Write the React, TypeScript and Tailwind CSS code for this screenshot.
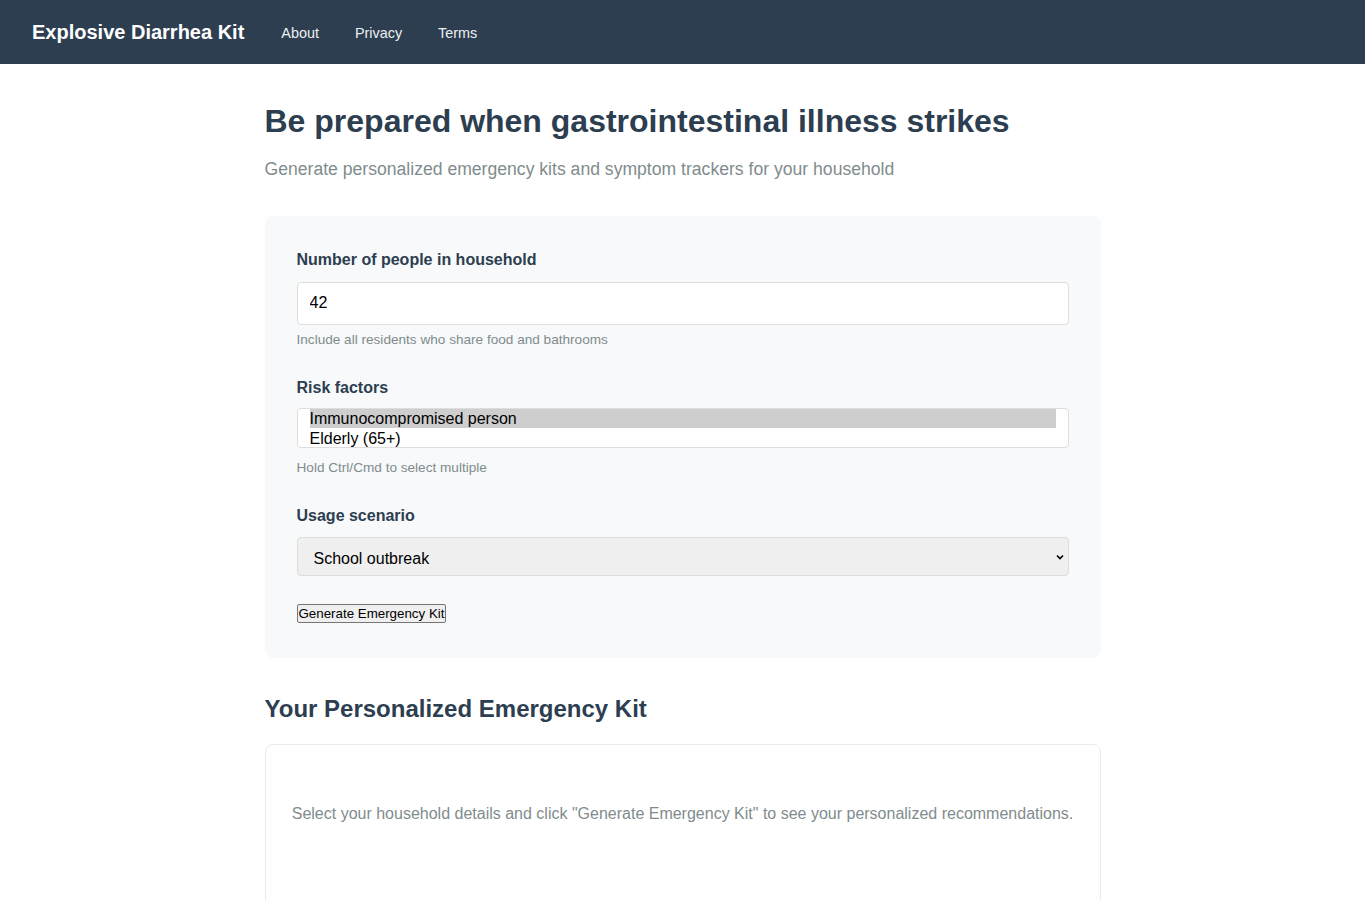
export default function App() {
  return (
    <div className="min-h-screen bg-white font-['Liberation_Sans',Arial,sans-serif] text-[#2c3e50]">
      <header className="flex h-16 items-center bg-[#2c3e50] px-8">
        <a href="#" className="text-[20px] font-bold text-white">
          Explosive Diarrhea Kit
        </a>
        <nav className="ml-[37px] flex gap-[36px] pt-[3px] text-[14.4px] text-[#ecf0f1]">
          <a href="#">About</a>
          <a href="#">Privacy</a>
          <a href="#">Terms</a>
        </nav>
      </header>

      <main className="mx-auto max-w-[900px] px-8 pt-[38px]">
        <h1 className="text-[32px] leading-[38px] font-bold">
          Be prepared when gastrointestinal illness strikes
        </h1>
        <p className="mt-[16px] text-[17.6px] text-[#7f8c8d]">
          Generate personalized emergency kits and symptom trackers for your household
        </p>

        <div className="mt-[34px] rounded-lg bg-[#f8f9fa] px-8 pt-8 pb-[35px]">
          <div>
            <label className="block text-[16px] font-bold">Number of people in household</label>
            <input
              type="number"
              defaultValue={42}
              className="mt-[10px] block h-[43px] w-full rounded border border-[#dddddd] bg-white px-3 pb-px text-[16px] text-black"
            />
            <p className="mt-[5px] text-[13.6px] text-[#7f8c8d]">
              Include all residents who share food and bathrooms
            </p>
          </div>

          <div className="mt-[25px]">
            <label className="block text-[16px] font-bold">Risk factors</label>
            <div className="mt-[8px] h-[40px] w-full overflow-hidden rounded border border-[#dddddd] bg-white px-3 text-[16px] leading-[19px] text-black">
              <div className="bg-[#cecece]">Immunocompromised person</div>
              <div className="pt-px">Elderly (65+)</div>
            </div>
            <p className="mt-[10px] text-[13.6px] text-[#7f8c8d]">Hold Ctrl/Cmd to select multiple</p>
          </div>

          <div className="mt-[26px]">
            <label className="block text-[16px] font-bold">Usage scenario</label>
            <div className="relative mt-[9px] h-[39px] w-full overflow-hidden rounded border border-[#dddddd] bg-[#efefef] text-[16px] text-black">
              <span className="absolute top-[9px] left-4">School outbreak</span>
              <svg
                className="absolute top-[16px] right-[4px]"
                width="8"
                height="6"
                viewBox="0 0 8 6"
                fill="none"
              >
                <path d="M1 1.5l3 3 3-3" stroke="#000" strokeWidth="1.6" />
              </svg>
            </div>
          </div>

          <button className="mt-[28px] block rounded-[2px] border border-[#767676] bg-[#efefef] px-px py-px text-[13.33px] leading-[15px] text-black">
            Generate Emergency Kit
          </button>
        </div>

        <h2 className="mt-[33px] text-[24px] font-bold">Your Personalized Emergency Kit</h2>

        <div className="mt-[17px] min-h-[200px] rounded-lg border border-[#e9ecef] bg-white px-6 pt-[57px] text-center text-[16px] text-[#7f8c8d]">
          Select your household details and click "Generate Emergency Kit" to see your personalized recommendations.
        </div>
      </main>
    </div>
  );
}
